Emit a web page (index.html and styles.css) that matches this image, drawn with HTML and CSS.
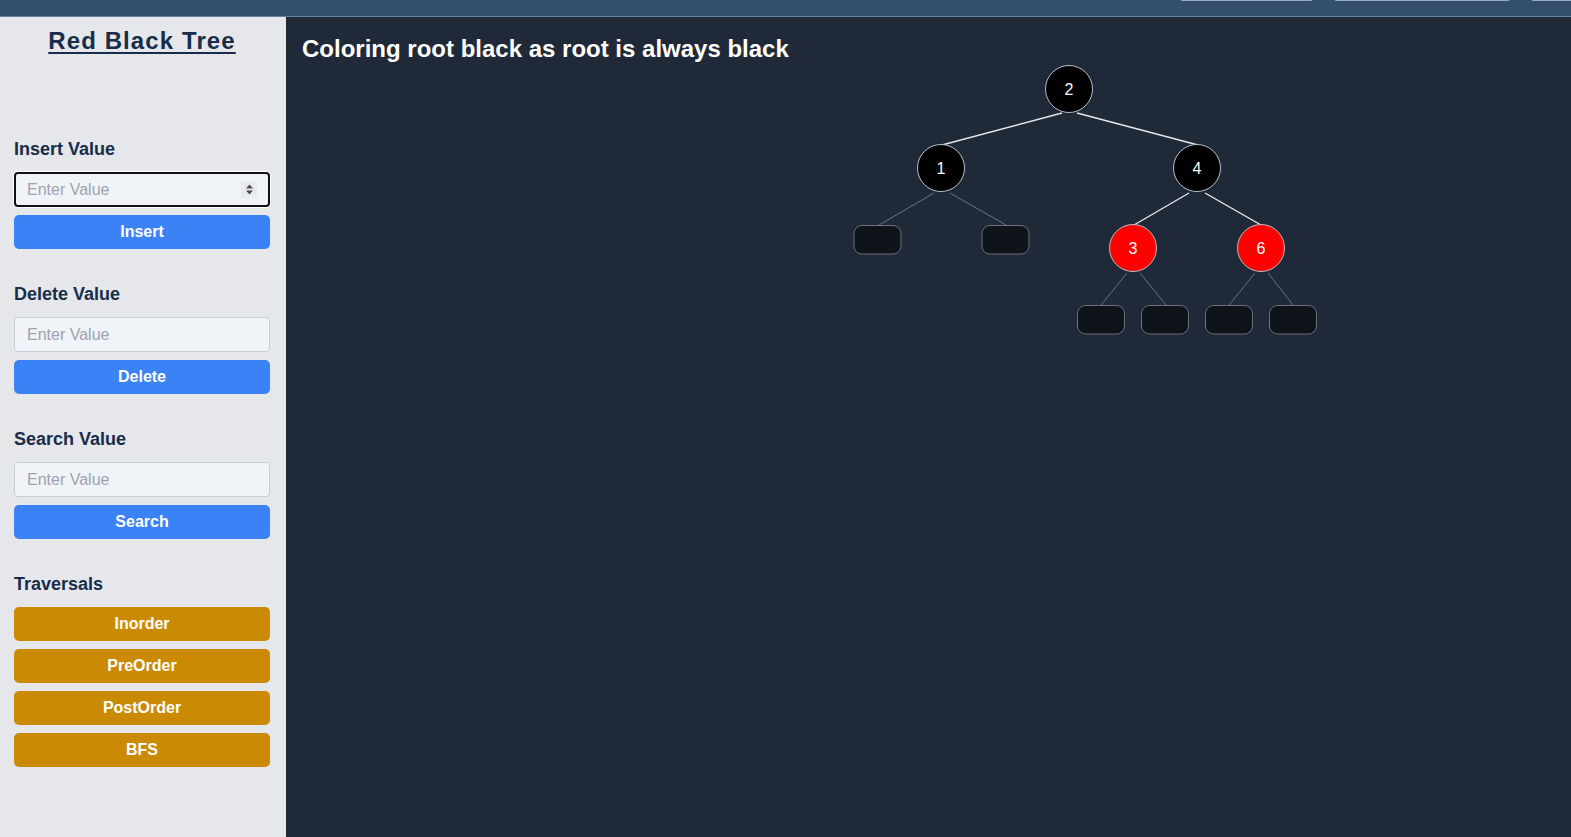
FILE: index.html
```html
<!DOCTYPE html>
<html>
<head>
<meta charset="utf-8">
<link rel="stylesheet" href="styles.css">
</head>
<body>
<header class="topbar">
  <div class="peek peek-a"></div>
  <div class="peek peek-b"></div>
  <div class="peek peek-c"></div>
</header>
<div class="layout">
  <aside class="sidebar">
    <h1 class="title">Red Black Tree</h1>
    <section class="group first">
      <h2 class="label">Insert Value</h2>
      <div class="field focused">
        <input class="input" type="text" placeholder="Enter Value">
        <span class="spin"><svg width="9" height="13" viewBox="0 0 9 13"><path d="M1 5.5 L4.5 1.5 L8 5.5 Z M1 7.5 L4.5 11.5 L8 7.5 Z" fill="#4a4a4a"/></svg></span>
      </div>
      <button class="btn blue">Insert</button>
    </section>
    <section class="group">
      <h2 class="label">Delete Value</h2>
      <div class="field"><input class="input" type="text" placeholder="Enter Value"></div>
      <button class="btn blue">Delete</button>
    </section>
    <section class="group">
      <h2 class="label">Search Value</h2>
      <div class="field"><input class="input" type="text" placeholder="Enter Value"></div>
      <button class="btn blue">Search</button>
    </section>
    <section class="group">
      <h2 class="label">Traversals</h2>
      <button class="btn gold">Inorder</button>
      <button class="btn gold">PreOrder</button>
      <button class="btn gold">PostOrder</button>
      <button class="btn gold">BFS</button>
    </section>
  </aside>
  <main class="canvas">
    <h2 class="message">Coloring root black as root is always black</h2>
    <svg class="tree" viewBox="284 17 1285 820" width="1285" height="820">
      <g class="edge-real">
        <line x1="1060" y1="113" x2="940" y2="145"/>
        <line x1="1075" y1="113" x2="1196" y2="145"/>
        <line x1="1187" y1="193" x2="1132" y2="225"/>
        <line x1="1203" y1="193" x2="1259" y2="225"/>
      </g>
      <g class="edge-nil">
        <line x1="932" y1="193" x2="877" y2="225"/>
        <line x1="948" y1="193" x2="1004" y2="225"/>
        <line x1="1125" y1="273" x2="1099" y2="305"/>
        <line x1="1138" y1="273" x2="1164" y2="305"/>
        <line x1="1253" y1="273" x2="1227" y2="305"/>
        <line x1="1266" y1="273" x2="1291" y2="305"/>
      </g>
      <g class="nil">
        <rect x="852" y="225.5" width="47" height="28.5" rx="8"/>
        <rect x="980" y="225.5" width="47" height="28.5" rx="8"/>
        <rect x="1075.5" y="305.5" width="47" height="28.5" rx="8"/>
        <rect x="1139.5" y="305.5" width="47" height="28.5" rx="8"/>
        <rect x="1203.5" y="305.5" width="47" height="28.5" rx="8"/>
        <rect x="1267.5" y="305.5" width="47" height="28.5" rx="8"/>
      </g>
      <g class="node black"><circle cx="1067" cy="89" r="23.5"/><text x="1067" y="89">2</text></g>
      <g class="node black"><circle cx="939" cy="168" r="23.5"/><text x="939" y="168">1</text></g>
      <g class="node black"><circle cx="1195" cy="168" r="23.5"/><text x="1195" y="168">4</text></g>
      <g class="node red"><circle cx="1131" cy="248" r="23.5"/><text x="1131" y="248">3</text></g>
      <g class="node red"><circle cx="1259" cy="248" r="23.5"/><text x="1259" y="248">6</text></g>
    </svg>
  </main>
</div>
</body>
</html>
```

FILE: styles.css
```css
* { box-sizing: border-box; }
html, body { margin: 0; padding: 0; height: 100%; }
body {
  font-family: "Liberation Sans", Arial, sans-serif;
  background: #1f2937;
  overflow: hidden;
}
.topbar {
  height: 17px;
  background: #334f6b;
  border-bottom: 1px solid #6585a6;
  display: flex;
  justify-content: flex-end;
  gap: 21px;
}
.peek {
  height: 30px;
  margin-top: -29px;
  background: #e8f0fc;
  border: 1px solid #9aa9bb;
  border-top: none;
  border-radius: 0 0 3px 3px;
}
.peek-a { width: 133px; }
.peek-b { width: 176px; }
.peek-c { width: 40px; border-right: none; border-radius: 0 0 0 3px; }
.layout {
  display: flex;
  height: calc(100% - 17px);
}
.sidebar {
  width: 286px;
  flex: none;
  background: #e5e7eb;
  padding: 10px 16px 0 14px;
  display: flex;
  flex-direction: column;
}
.title {
  margin: 0;
  text-align: center;
  font-size: 24px;
  line-height: 28px;
  font-weight: bold;
  letter-spacing: 1.1px;
  color: #172d4a;
  text-decoration: underline;
  text-decoration-thickness: 2px;
  text-underline-offset: 3px;
}
.group { display: flex; flex-direction: column; margin-top: 31px; }
.group.first { margin-top: 80px; }
.label {
  margin: 0 0 9px;
  font-size: 18px;
  line-height: 28px;
  font-weight: bold;
  color: #172d4a;
}
.field {
  position: relative;
  height: 35px;
  border: 1px solid #c3cfdd;
  border-radius: 4px;
  background: #f0f3f8;
}
.field.focused {
  border: 2px solid #111;
  box-shadow: 0 0 0 1px #fff;
}
.input {
  width: 100%;
  height: 100%;
  border: none;
  background: transparent;
  padding: 0 12px;
  font-family: "Liberation Sans", Arial, sans-serif;
  font-size: 16px;
  color: #111;
  outline: none;
}
.focused .input { padding-left: 11px; }
.input::placeholder { color: #9ca3af; }
.spin {
  position: absolute;
  right: 11px;
  top: 7px;
  width: 16px;
  height: 17px;
  background: #e9ebee;
  display: flex;
  align-items: center;
  justify-content: center;
}
.btn {
  margin-top: 8px;
  height: 34px;
  border: none;
  border-radius: 5px;
  color: #fff;
  font-family: "Liberation Sans", Arial, sans-serif;
  font-size: 16px;
  font-weight: bold;
  padding: 0;
}
.blue { background: #3b82f6; }
.gold { background: #ca8a04; }
.label + .btn { margin-top: 0; }
.canvas {
  position: relative;
  flex: 1;
  background: #1f2937;
  padding: 16px 16px;
}
.message {
  margin: 0;
  font-size: 24px;
  line-height: 32px;
  font-weight: bold;
  color: #fff;
}
.tree {
  position: absolute;
  left: 0;
  top: 0;
}
.edge-real line { stroke: #e5e7eb; stroke-width: 1.4; }
.edge-nil line { stroke: #6b7280; stroke-width: 1; }
.nil rect { fill: #0f141b; stroke: #6b7280; stroke-width: 1; }
.node circle { stroke: #b8bfc9; stroke-width: 1; }
.node.black circle { fill: #000; }
.node.red circle { fill: #ff0000; }
.node text {
  fill: #fff;
  font-family: "Liberation Sans", Arial, sans-serif;
  font-size: 16px;
  text-anchor: middle;
  dominant-baseline: central;
}
```
